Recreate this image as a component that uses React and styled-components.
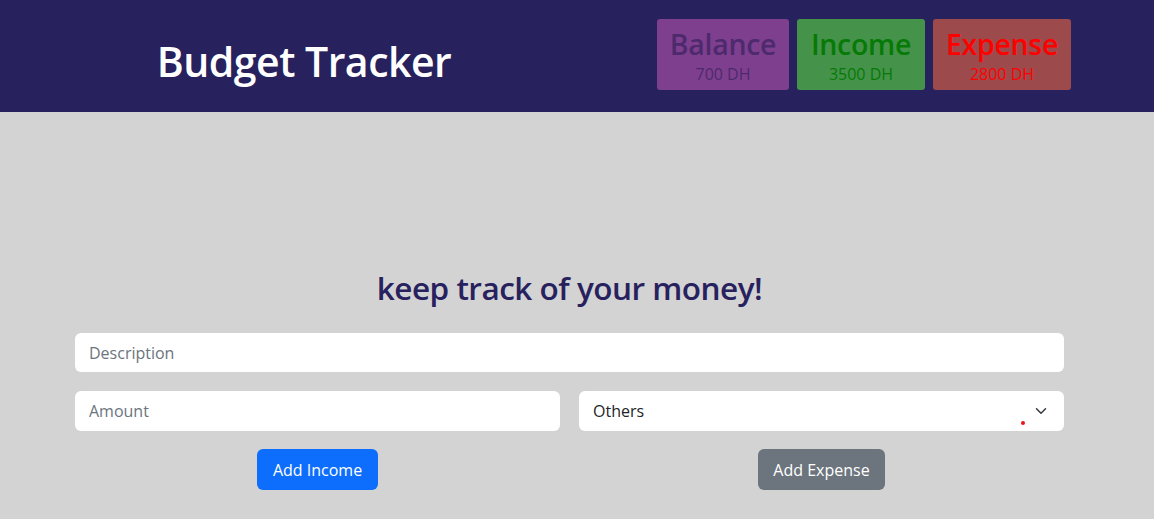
import styled, { createGlobalStyle } from "styled-components";

const GlobalStyle = createGlobalStyle`
  body {
    margin: 0;
    background: #d3d3d3;
    font-family: "Open Sans", "Noto Sans", sans-serif;
  }
  * {
    box-sizing: border-box;
  }
`;

const Header = styled.header`
  height: 112px;
  background: #27215e;
  display: flex;
  align-items: center;
`;

const Brand = styled.h1`
  width: 608px;
  margin: 9px 0 0;
  text-align: center;
  color: #ffffff;
  font-size: 41px;
  font-weight: 600;
  letter-spacing: -0.5px;
`;

const Cards = styled.div`
  display: flex;
  gap: 8px;
  margin-left: 49px;
  margin-top: -4px;
`;

const Card = styled.div`
  width: ${(p) => p.$w}px;
  height: 71px;
  border-radius: 3px;
  background: ${(p) => p.$bg};
  color: ${(p) => p.$fg};
  display: flex;
  flex-direction: column;
  align-items: center;
  padding-top: 7px;
`;

const CardTitle = styled.div`
  font-size: 28.5px;
  font-weight: 600;
  line-height: 36px;
  letter-spacing: -0.3px;
`;

const CardAmount = styled.div`
  font-size: 16px;
  line-height: 22px;
  margin-top: 1px;
`;

const Main = styled.main`
  width: 989px;
  margin-left: 75px;
  padding-top: 156px;
`;

const Heading = styled.h2`
  margin: 0 0 25px;
  text-align: center;
  color: #27215e;
  font-size: 31.5px;
  font-weight: 600;
  letter-spacing: -0.5px;
  line-height: 40px;
`;

const Field = styled.input`
  display: block;
  width: 100%;
  height: ${(p) => p.$h || 39}px;
  border: none;
  border-radius: 6px;
  background: #fff;
  padding: 0 14px;
  font-family: inherit;
  font-size: 16px;
  color: #212529;
  &::placeholder {
    color: #6c757d;
  }
`;

const Row = styled.div`
  display: grid;
  grid-template-columns: 1fr 1fr;
  column-gap: 19px;
  margin-top: 19px;
`;

const Col = styled.div`
  display: flex;
  flex-direction: column;
  align-items: center;
  gap: 18px;
`;

const SelectBox = styled.div`
  position: relative;
  width: 100%;
  height: 40px;
  border-radius: 6px;
  background: #fff;
  display: flex;
  align-items: center;
  padding: 0 14px;
  font-size: 16px;
  color: #212529;
`;

const Chevron = styled.svg`
  position: absolute;
  right: 16px;
  top: 14px;
`;

const Dot = styled.span`
  position: absolute;
  left: 442px;
  top: 30px;
  width: 4px;
  height: 4px;
  border-radius: 50%;
  background: #e8141c;
`;

const Button = styled.button`
  height: 41px;
  border: none;
  border-radius: 6px;
  padding: 0 ${(p) => p.$pad}px;
  font-family: inherit;
  font-size: 16px;
  color: #fff;
  background: ${(p) => p.$bg};
`;

export default function App() {
  return (
    <>
      <GlobalStyle />
      <Header>
        <Brand>Budget Tracker</Brand>
        <Cards>
          <Card $w={132} $bg="#7f3f8f" $fg="#4d2a6b">
            <CardTitle>Balance</CardTitle>
            <CardAmount>700 DH</CardAmount>
          </Card>
          <Card $w={128} $bg="#45924b" $fg="#067a05">
            <CardTitle>Income</CardTitle>
            <CardAmount>3500 DH</CardAmount>
          </Card>
          <Card $w={138} $bg="#9c4a4c" $fg="#ff0000">
            <CardTitle>Expense</CardTitle>
            <CardAmount>2800 DH</CardAmount>
          </Card>
        </Cards>
      </Header>
      <Main>
        <Heading>keep track of your money!</Heading>
        <Field placeholder="Description" />
        <Row>
          <Col>
            <Field placeholder="Amount" $h={40} />
            <Button $bg="#0d6efd" $pad={16}>Add Income</Button>
          </Col>
          <Col>
            <SelectBox>
              Others
              <Dot />
              <Chevron width="14" height="12" viewBox="0 0 16 16">
                <path d="M2 5l6 6 6-6" fill="none" stroke="#343a40" strokeWidth="2" strokeLinecap="round" strokeLinejoin="round" />
              </Chevron>
            </SelectBox>
            <Button $bg="#6c757d" $pad={15}>Add Expense</Button>
          </Col>
        </Row>
      </Main>
    </>
  );
}
